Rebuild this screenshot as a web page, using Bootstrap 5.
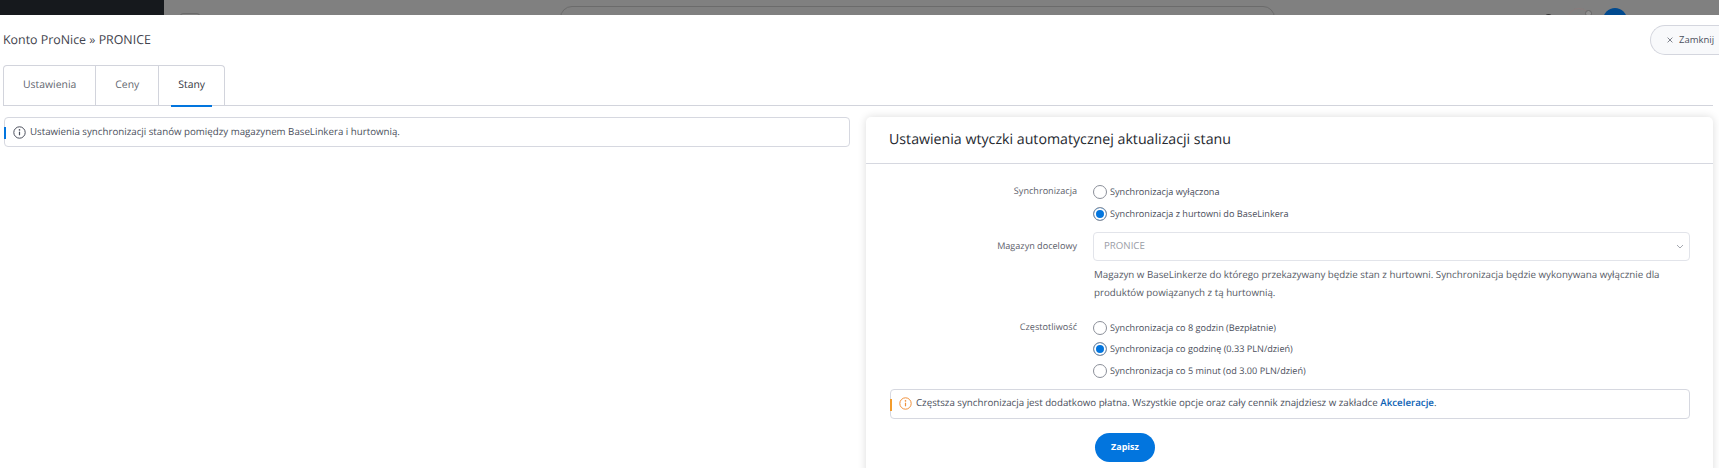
<!DOCTYPE html>
<html lang="pl">
<head>
<meta charset="utf-8">
<title>Konto ProNice</title>
<link href="https://cdn.jsdelivr.net/npm/bootstrap@5.3.0/dist/css/bootstrap.min.css" rel="stylesheet">
<style>
html,body{height:468px;overflow:hidden;}
body{font-family:"Open Sans","Noto Sans",sans-serif;font-size:10px;color:#4b4f5c;background:#fff;text-rendering:geometricPrecision;}
.topstrip{height:15px;background:#808080;overflow:hidden;position:relative;}
.topside{width:164px;background:#16191d;}
.topbox{position:absolute;border:1px solid #6b6b6b;}
.topcheck{left:180px;top:13px;width:20px;height:10px;border-radius:3px;}
.topsearch{left:560px;top:6px;width:715px;height:30px;border-radius:12px;}
.topring{left:1567px;top:8px;width:24px;height:24px;border-radius:50%;border-color:#8a7c7c;}
.toppin{left:1585px;top:10px;width:7px;height:7px;border-radius:50%;background:#8f8f8f;border-color:#666;}
.topdot{left:1603px;top:8px;width:24px;height:24px;border-radius:50%;background:#014a8f;border:0;}
.topsmall{left:1545px;top:14px;width:7px;height:7px;border-radius:50%;background:#333;border:0;}
.pagearea{padding:0 6px 0 3px;position:relative;}
.headrow{height:50px;padding-top:16px;}
.acct{font-size:12.4px;line-height:17px;color:#3f434d;}
.closebtn{position:absolute;top:10px;right:-1px;width:70px;height:30px;border:1px solid #d4d6de;border-radius:15px 0 0 15px;border-right:0;background:#f8f9fb;font-size:9.5px;color:#4b4f5c;padding:0 0 0 16px;display:flex;align-items:center;gap:6px;}
.tabbar{height:41px;border-bottom:1px solid #d2d4dc;}
.tabgroup{border:1px solid #d2d4dc;border-bottom:0;border-radius:4px 4px 0 0;height:41px;}
.tabcell{font-size:10.4px;line-height:39px;color:#62666f;padding:0 19px;border-left:1px solid #d2d4dc;position:relative;}
.tabcell:first-child{border-left:0;}
.tabactive{color:#33363d;padding:0 19px;}
.tabactive::after{content:"";position:absolute;left:12px;right:12px;bottom:-1px;height:2px;background:#0275de;}
.maincols{margin-top:11px;}
.leftcol{width:847px;flex:none;padding-left:1px;}
.rightcol{width:847px;flex:none;margin-left:16px;}
.notice{position:relative;border:1px solid #d6d8e0;border-radius:4px;min-height:30px;display:flex;align-items:center;gap:4px;padding:0 0 0 8px;font-size:9.72px;color:#4b4f5c;}
.notice::before{content:"";position:absolute;left:-1px;top:9px;width:2px;height:12px;background:#0275de;}
.warnnote::before{background:#f39c2c;}
.setcard{border:0;border-radius:5px;box-shadow:0 0 8px rgba(0,0,0,.14);background:#fff;height:360px;}
.sethead{height:47px;border-bottom:1px solid #d6d8e0;padding:0 23px;font-size:14.2px;line-height:46px;color:#25282f;}
.setbody{padding:17px 0 0;}
.lblcol{width:211px;flex:none;text-align:right;font-size:9.1px;color:#5c606a;line-height:20px;}
.fldcol{margin-left:16px;width:597px;flex:none;}
.radioline{display:flex;align-items:center;gap:3px;height:22px;font-size:9.15px;color:#4b4f5c;}
.radiotight .radioline{height:21.5px;}
.fakeradio{width:14px;height:14px;border-radius:50%;border:1px solid #8b8f99;display:block;flex:none;background:#fff;}
.radioon{background:#0275de;box-shadow:inset 0 0 0 2px #fff;}
.fakeselect{height:29px;border:1px solid #e2e4ea;border-radius:4px;display:flex;align-items:center;justify-content:space-between;padding:0 5px 0 10px;font-size:9.7px;color:#9a9da6;}
.helptext{font-size:9.75px;line-height:18px;color:#565a65;padding:5px 0 0 1px;margin:0;width:592px;}
.warnwrap{margin:7px 0 0 24px;width:800px;}
.warnnote a{color:#0b62b4;font-weight:600;text-decoration:none;}
.savebtn{width:60px;height:29px;border-radius:15px;background:#0275de;color:#fff;border:0;font-size:9px;font-weight:700;margin:14px 0 0 229px;padding:0;display:block;}
.gapselect{margin-top:7px;}
.gapfreq{margin-top:15px;}
</style>
</head>
<body>
<div class="topstrip d-flex">
  <div class="topside"></div>
  <div class="topbox topcheck"></div>
  <div class="topbox topsearch"></div>
  <div class="topbox topsmall"></div>
  <div class="topbox topring"></div>
  <div class="topbox toppin"></div>
  <div class="topbox topdot"></div>
</div>
<div class="pagearea">
  <div class="headrow"><div class="acct">Konto ProNice » PRONICE</div></div>
  <button class="closebtn" type="button">
    <svg width="6" height="6" viewBox="0 0 7 7"><path d="M.7.7l5.6 5.6M6.3.7L.7 6.3" stroke="#6b6f7a" stroke-width="1" fill="none"/></svg>
    <span>Zamknij</span>
  </button>
  <div class="tabbar d-flex">
    <div class="tabgroup d-flex">
      <div class="tabcell">Ustawienia</div>
      <div class="tabcell">Ceny</div>
      <div class="tabcell tabactive">Stany</div>
    </div>
  </div>
  <div class="maincols d-flex align-items-start">
    <div class="leftcol">
      <div class="notice">
        <svg width="13" height="13" viewBox="0 0 13 13"><circle cx="6.5" cy="6.5" r="5.7" fill="none" stroke="#4b4f5c" stroke-width="1"/><path d="M6.5 5.7v3.6" stroke="#4b4f5c" stroke-width="1.2"/><circle cx="6.5" cy="3.9" r=".8" fill="#4b4f5c"/></svg>
        <span>Ustawienia synchronizacji stanów pomiędzy magazynem BaseLinkera i hurtownią.</span>
      </div>
    </div>
    <div class="rightcol">
      <div class="setcard">
        <div class="sethead">Ustawienia wtyczki automatycznej aktualizacji stanu</div>
        <div class="setbody">
          <div class="d-flex">
            <div class="lblcol">Synchronizacja</div>
            <div class="fldcol">
              <div class="radioline"><span class="fakeradio"></span>Synchronizacja wyłączona</div>
              <div class="radioline"><span class="fakeradio radioon"></span>Synchronizacja z hurtowni do BaseLinkera</div>
            </div>
          </div>
          <div class="d-flex gapselect">
            <div class="lblcol pt-1">Magazyn docelowy</div>
            <div class="fldcol">
              <div class="fakeselect"><span>PRONICE</span><svg width="8" height="5" viewBox="0 0 8 5"><path d="M1 1l3 3 3-3" stroke="#a5a8b0" stroke-width="1" fill="none"/></svg></div>
              <p class="helptext">Magazyn w BaseLinkerze do którego przekazywany będzie stan z hurtowni. Synchronizacja będzie wykonywana wyłącznie dla produktów powiązanych z tą hurtownią.</p>
            </div>
          </div>
          <div class="d-flex gapfreq">
            <div class="lblcol">Częstotliwość</div>
            <div class="fldcol radiotight">
              <div class="radioline"><span class="fakeradio"></span>Synchronizacja co 8 godzin (Bezpłatnie)</div>
              <div class="radioline"><span class="fakeradio radioon"></span>Synchronizacja co godzinę (0.33 PLN/dzień)</div>
              <div class="radioline"><span class="fakeradio"></span>Synchronizacja co 5 minut (od 3.00 PLN/dzień)</div>
            </div>
          </div>
          <div class="warnwrap">
            <div class="notice warnnote">
              <svg width="13" height="13" viewBox="0 0 13 13"><circle cx="6.5" cy="6.5" r="5.7" fill="none" stroke="#f0903a" stroke-width="1"/><path d="M6.5 5.7v3.6" stroke="#f0903a" stroke-width="1.2"/><circle cx="6.5" cy="3.9" r=".8" fill="#f0903a"/></svg>
              <span>Częstsza synchronizacja jest dodatkowo płatna. Wszystkie opcje oraz cały cennik znajdziesz w zakładce <a href="#">Akceleracje</a>.</span>
            </div>
          </div>
          <button class="savebtn" type="button">Zapisz</button>
        </div>
      </div>
    </div>
  </div>
</div>
</body>
</html>
